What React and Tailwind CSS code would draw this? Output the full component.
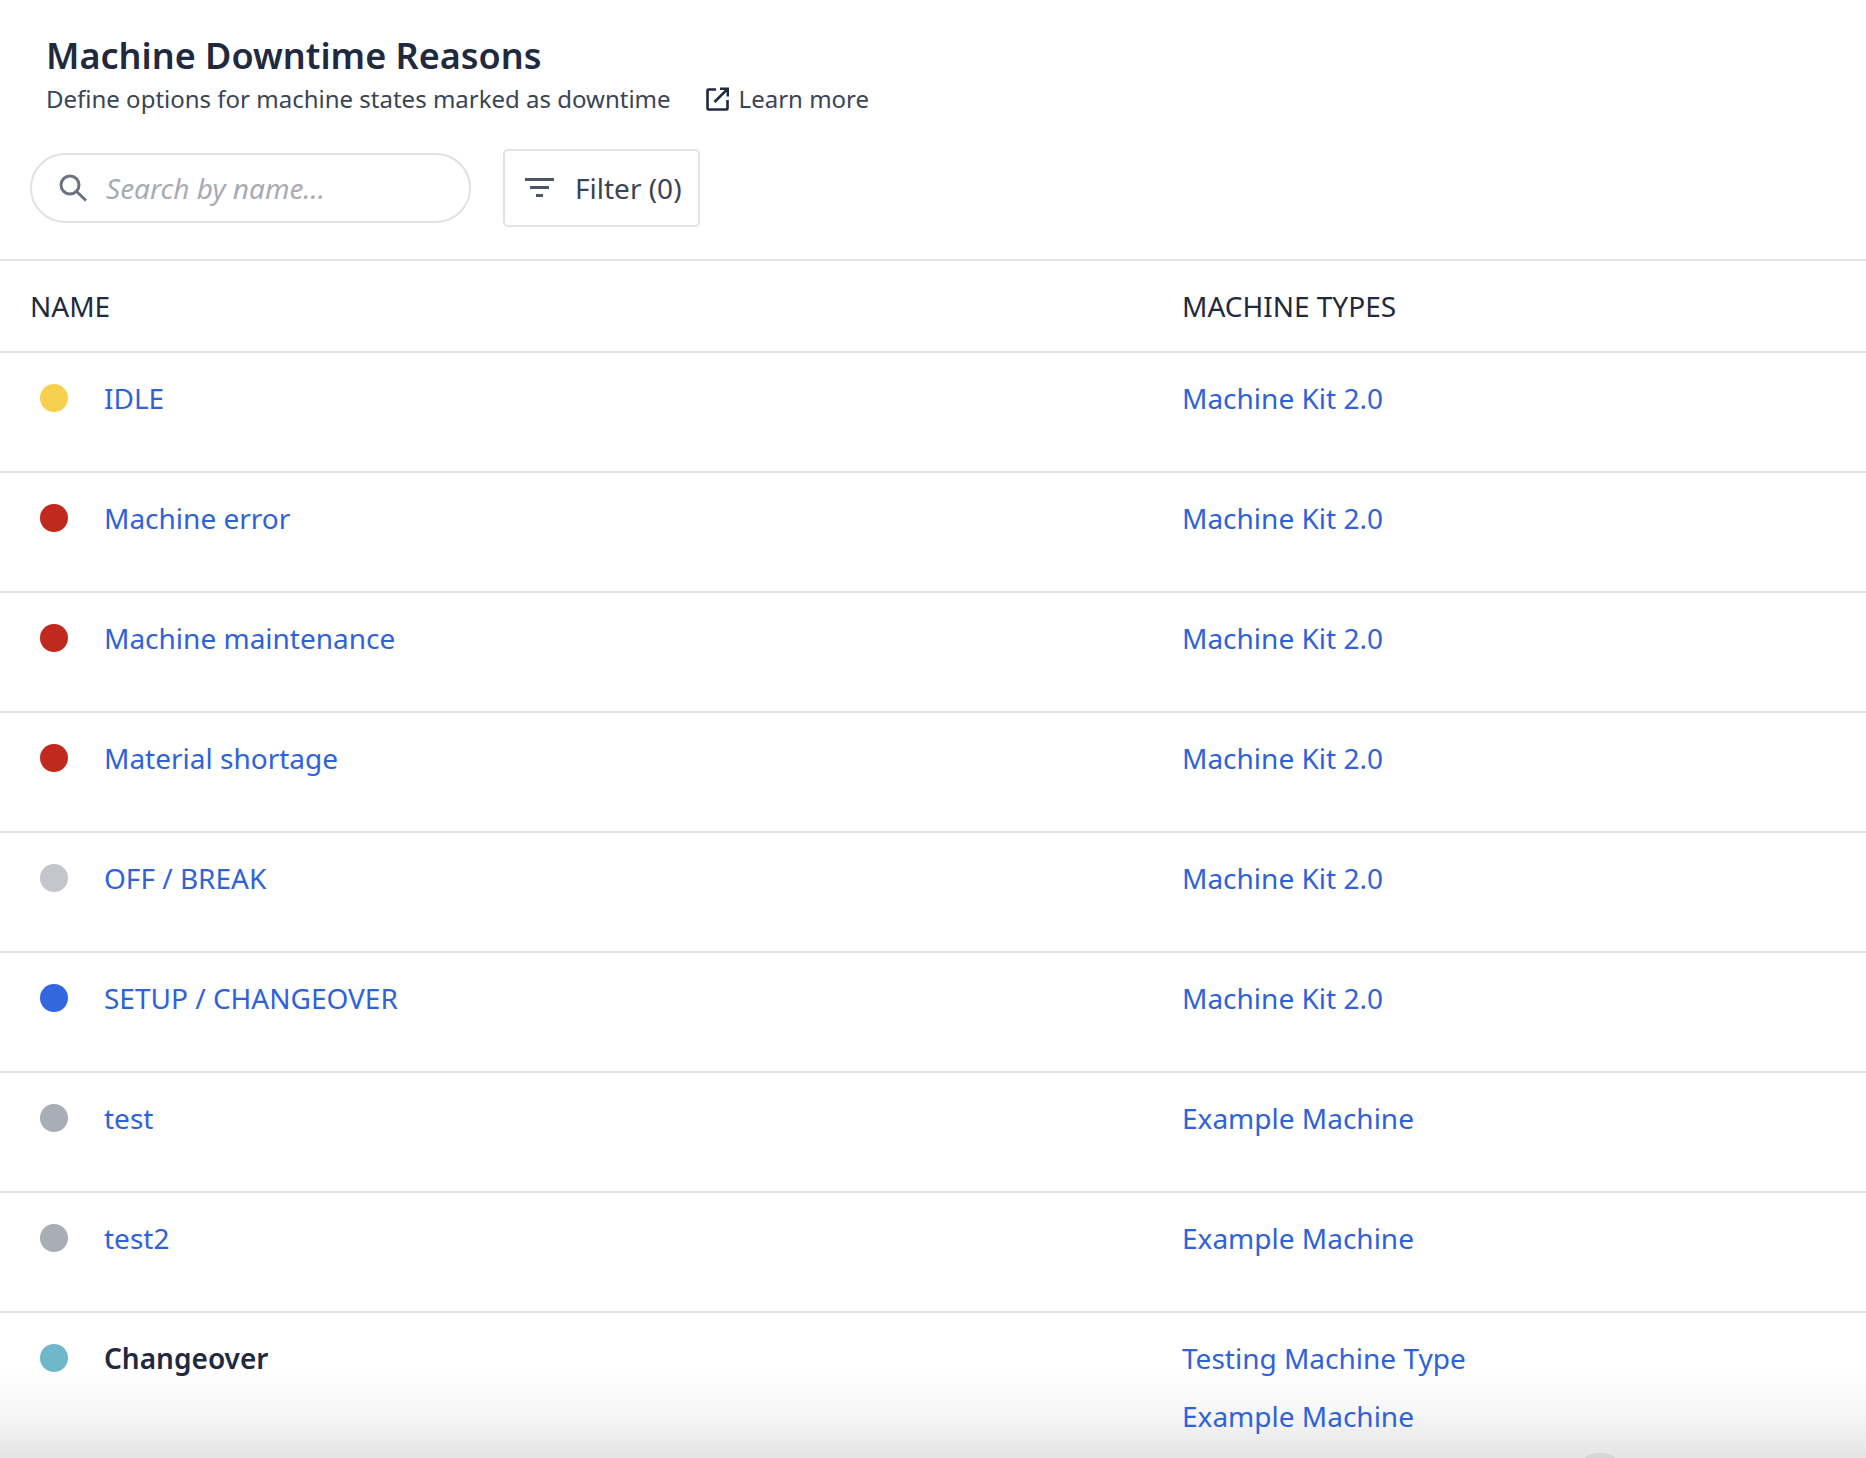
import React from 'react';

const rows = [
  { name: 'IDLE', dot: 'bg-[#f7d04e]', types: ['Machine Kit 2.0'] },
  { name: 'Machine error', dot: 'bg-[#c0291d]', types: ['Machine Kit 2.0'] },
  { name: 'Machine maintenance', dot: 'bg-[#c0291d]', types: ['Machine Kit 2.0'] },
  { name: 'Material shortage', dot: 'bg-[#c0291d]', types: ['Machine Kit 2.0'] },
  { name: 'OFF / BREAK', dot: 'bg-[#c5c6cb]', types: ['Machine Kit 2.0'] },
  { name: 'SETUP / CHANGEOVER', dot: 'bg-[#3367e0]', types: ['Machine Kit 2.0'] },
  { name: 'test', dot: 'bg-[#a9adb5]', types: ['Example Machine'] },
  { name: 'test2', dot: 'bg-[#a9adb5]', types: ['Example Machine'] },
  { name: 'Changeover', dot: 'bg-[#6eb8ca]', types: ['Testing Machine Type', 'Example Machine'], plain: true },
];

function Row({ row }) {
  return (
    <div className="flex h-[120px] border-b-2 border-[#e2e3e6] last:border-b-0">
      <div className="flex w-[1182px] items-start pl-[40px] pt-[27px]">
        <span className={`mt-[4px] h-[28px] w-[28px] rounded-full ${row.dot}`} />
        <span className={row.plain ? 'ml-[36px] text-[28px] leading-[36px] font-semibold text-[#1f2a40]' : 'ml-[36px] text-[28px] leading-[36px] text-[#2f62da]'}>
          {row.name}
        </span>
      </div>
      <div className="flex flex-col gap-[22px] pt-[27px]">
        {row.types.map((t) => (
          <span key={t} className="text-[28px] leading-[36px] text-[#2f62da]">{t}</span>
        ))}
      </div>
    </div>
  );
}

export default function App() {
  return (
    <div className="relative h-[1458px] w-[1866px] overflow-hidden bg-white font-['Noto_Sans',sans-serif]">
      <div className="absolute inset-x-0 bottom-0 h-[90px] bg-gradient-to-b from-white via-[#f7f7f7] via-50% to-[#e4e4e4]" />

      <div className="relative">
        <div className="pl-[46px] pt-[34px]">
          <h1 className="text-[36px] leading-[44px] font-semibold text-[#1f2a40]">Machine Downtime Reasons</h1>
          <div className="mt-[1px] flex items-center text-[24px] leading-[40px] text-[#3a4454]">
            <span>Define options for machine states marked as downtime</span>
            <svg className="ml-[34px] mr-[10px]" width="24" height="24" viewBox="0 0 24 24" fill="none" stroke="#1f2a40" strokeWidth="2.6">
              <path d="M11 2.5H3.5a1 1 0 0 0-1 1v18a1 1 0 0 0 1 1h18a1 1 0 0 0 1-1V13" />
              <path d="M15 1.8H22.8V9.6M22.4 2.2 9.5 15" />
            </svg>
            <span>Learn more</span>
          </div>
        </div>

        <div className="mt-[30px] flex items-center pl-[30px]">
          <div className="flex h-[70px] w-[441px] items-center rounded-full border-2 border-[#e0e1e5] pl-[26px]">
            <svg width="30" height="30" viewBox="0 0 30 30" fill="none" stroke="#6b7280" strokeWidth="3">
              <circle cx="12" cy="12" r="9" />
              <path d="M18.5 18.5 28 27.5" />
            </svg>
            <span className="ml-[18px] text-[28px] italic text-[#a7abb3]">Search by name...</span>
          </div>
          <div className="ml-[32px] flex h-[78px] w-[197px] items-center rounded-[5px] border-2 border-[#e2e3e6] pl-[18px]">
            <svg width="32" height="22" viewBox="0 0 32 22" fill="#4b5563">
              <rect x="2" y="1" width="29" height="3" />
              <rect x="7" y="9" width="19" height="3" />
              <rect x="13" y="17" width="7" height="3" />
            </svg>
            <span className="ml-[20px] text-[28px] text-[#3a4454]">Filter (0)</span>
          </div>
        </div>

        <div className="mt-[32px] border-t-2 border-[#e2e3e6]">
          <div className="flex h-[92px] items-center border-b-2 border-[#e2e3e6] text-[28px] text-[#1f2a40]">
            <span className="w-[1182px] pl-[30px]">NAME</span>
            <span>MACHINE TYPES</span>
          </div>
          {rows.map((row) => (
            <Row key={row.name} row={row} />
          ))}
        </div>
      </div>

      <div className="absolute bottom-[-35px] left-[1578px] h-[40px] w-[44px] rounded-full bg-[#d4d6d6]" />
    </div>
  );
}
